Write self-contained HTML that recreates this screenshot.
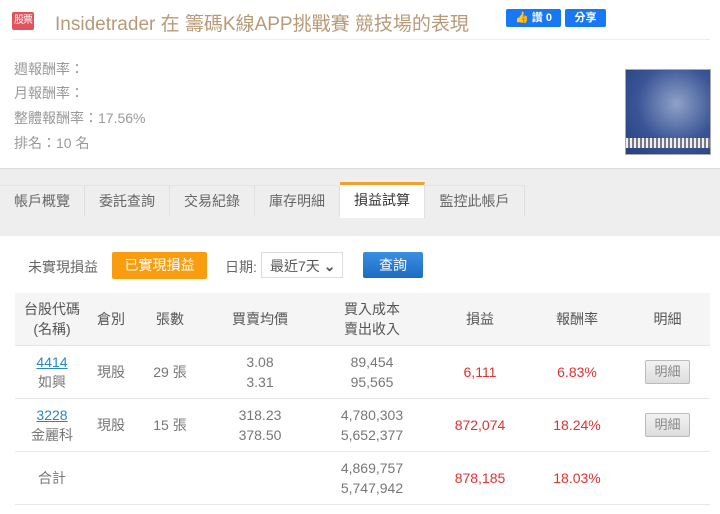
<!DOCTYPE html>
<html><head><meta charset="utf-8"><style>
body{margin:0;width:720px;height:514px;overflow:hidden;background:#fff;font-family:"Liberation Sans","Noto Sans CJK TC",sans-serif;color:#666;}
.abs{position:absolute;}
.badge{left:12px;top:12px;width:22px;height:18px;background:#e0525c;color:#fff;font-size:10px;line-height:18px;text-align:center;border-radius:2px;white-space:nowrap;letter-spacing:-1px;}
.title{left:55px;top:9px;font-size:19px;color:#b89a78;white-space:nowrap;}
.fb{top:9px;height:18px;background:#1877f2;color:#fff;font-size:11px;line-height:18px;border-radius:2px;font-weight:bold;text-align:center;}
.info{left:14px;font-size:14px;color:#999;}
.band{left:0;top:168px;width:720px;height:67px;background:#eeeeee;border-top:1px solid #ddd;}
.tab{top:185px;height:30px;line-height:30px;font-size:14px;color:#666;text-align:center;background:#eee;border-right:1px solid #e0e0e0;border-top:1px solid #e4e4e4;}
table{position:absolute;left:15px;top:293px;width:695px;border-collapse:collapse;font-size:14px;}
td{text-align:center;border-top:1px solid #e6e6e6;height:52px;line-height:20px;padding:0;color:#777;}
tr.h td{background:#f5f5f5;color:#555;border-top:none;}
td.r{color:#d33;}
.btn{display:inline-block;border:1px solid #bbb;background:linear-gradient(#f2f2f2,#ddd);color:#888;font-size:13px;padding:1px 8px;border-radius:2px;}
a{color:#2a86c8;text-decoration:underline;}
</style></head><body>
<div class="abs badge">股票</div>
<div class="abs title">Insidetrader 在 籌碼K線APP挑戰賽 競技場的表現</div>
<div class="abs fb" style="left:506px;width:55px;">👍 讚 0</div>
<div class="abs fb" style="left:565px;width:41px;">分享</div>
<div class="abs" style="left:12px;top:39px;width:698px;height:1px;background:#eee"></div>
<div class="abs info" style="top:59px">週報酬率：</div>
<div class="abs info" style="top:83px">月報酬率：</div>
<div class="abs info" style="top:108px">整體報酬率：17.56%</div>
<div class="abs info" style="top:133px">排名：10 名</div>
<div class="abs" style="left:625px;top:69px;width:84px;height:84px;background:radial-gradient(ellipse at 60% 40%,#8fa2c8,#3a5596 55%,#26407c);border:1px solid #aaa"><div style="position:absolute;left:0;bottom:6px;width:84px;height:10px;background:repeating-linear-gradient(90deg,#eee 0 2px,#778 2px 4px)"></div></div>
<div class="abs band"></div>
<div class="abs tab" style="left:0;width:84px">帳戶概覽</div>
<div class="abs tab" style="left:85px;width:84px">委託查詢</div>
<div class="abs tab" style="left:170px;width:84px">交易紀錄</div>
<div class="abs tab" style="left:255px;width:84px">庫存明細</div>
<div class="abs tab" style="left:340px;width:84px;background:#fff;color:#333;border-top:3px solid #f0a030;top:182px;height:33px">損益試算</div>
<div class="abs tab" style="left:425px;width:99px">監控此帳戶</div>
<div class="abs" style="left:28px;top:257px;font-size:14px;color:#666">未實現損益</div>
<div class="abs" style="left:112px;top:252px;width:95px;height:27px;background:#f99d10;color:#fff;font-size:14px;line-height:27px;text-align:center;border-radius:2px">已實現損益</div>
<div class="abs" style="left:225px;top:257px;font-size:14px;color:#666">日期:</div>
<div class="abs" style="left:261px;top:252px;width:82px;height:26px;border:1px solid #ddd;font-size:14px;line-height:26px;color:#555;padding-left:8px;box-sizing:border-box">最近7天 <b>⌄</b></div>
<div class="abs" style="left:363px;top:252px;width:60px;height:26px;background:linear-gradient(#3a8ee0,#1d6cc4);color:#fff;font-size:14px;line-height:26px;text-align:center;border-radius:2px">查詢</div>
<table>
<tr class="h"><td style="width:74px">台股代碼<br>(名稱)</td><td style="width:44px">倉別</td><td style="width:74px">張數</td><td style="width:106px">買賣均價</td><td style="width:118px">買入成本<br>賣出收入</td><td style="width:98px">損益</td><td style="width:96px">報酬率</td><td>明細</td></tr>
<tr><td><a>4414</a><br>如興</td><td>現股</td><td>29 張</td><td>3.08<br>3.31</td><td>89,454<br>95,565</td><td class="r">6,111</td><td class="r">6.83%</td><td><span class="btn">明細</span></td></tr>
<tr><td><a>3228</a><br>金麗科</td><td>現股</td><td>15 張</td><td>318.23<br>378.50</td><td>4,780,303<br>5,652,377</td><td class="r">872,074</td><td class="r">18.24%</td><td><span class="btn">明細</span></td></tr>
<tr><td>合計</td><td></td><td></td><td></td><td>4,869,757<br>5,747,942</td><td class="r">878,185</td><td class="r">18.03%</td><td></td></tr>
</table>
<div class="abs" style="left:15px;top:504px;width:695px;height:1px;background:#e6e6e6"></div>
</body></html>
